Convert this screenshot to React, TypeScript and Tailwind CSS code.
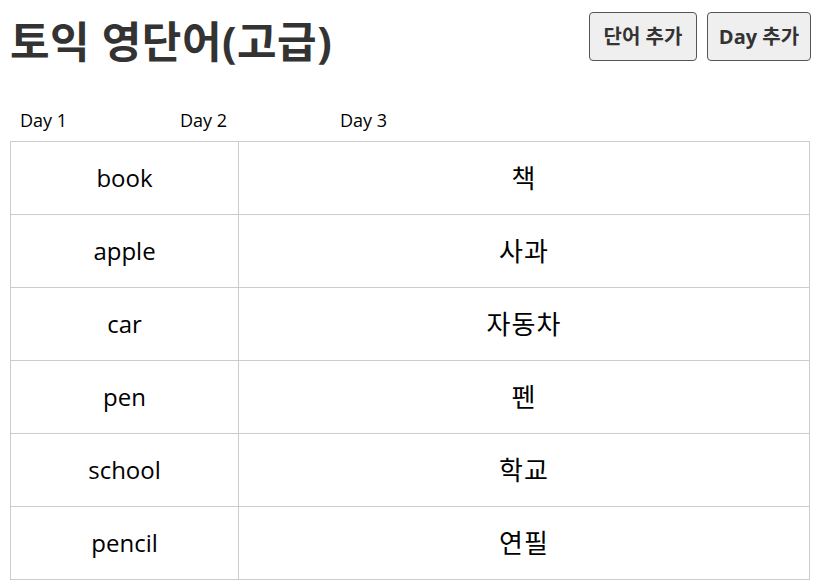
const words = [
  { eng: "book", kor: "책" },
  { eng: "apple", kor: "사과" },
  { eng: "car", kor: "자동차" },
  { eng: "pen", kor: "펜" },
  { eng: "school", kor: "학교" },
  { eng: "pencil", kor: "연필" },
];

const days = [1, 2, 3];

export default function App() {
  return (
    <div className="min-h-[587px] w-[821px] bg-white px-[10px] font-['Open_Sans','Noto_Sans_CJK_KR',sans-serif] text-black">
      <header className="flex items-start justify-between pt-[12px]">
        <h1 className="mt-[5px] text-[43px] leading-[50px] font-bold tracking-[0.5px] text-[#333]">토익 영단어(고급)</h1>
        <div className="flex gap-[10px]">
          <button
            type="button"
            className="h-[49px] w-[108px] rounded-[4px] border border-[#555] bg-[#efefef] text-[20px] font-bold text-[#333]"
          >
            단어 추가
          </button>
          <button
            type="button"
            className="h-[49px] w-[104px] rounded-[4px] border border-[#555] bg-[#efefef] text-[20px] font-bold text-[#333]"
          >
            Day 추가
          </button>
        </div>
      </header>
      <ul className="mt-[40px] flex px-[10px]">
        {days.map((d) => (
          <li key={d} className="w-[160px] text-[18px] leading-[26px]">
            Day {d}
          </li>
        ))}
      </ul>
      <table className="mt-[8px] w-[800px] border-collapse">
        <tbody>
          {words.map((w) => (
            <tr key={w.eng}>
              <td className="h-[73px] w-[228px] border border-[#ccc] text-center text-[24px]">{w.eng}</td>
              <td className="h-[73px] border border-[#ccc] text-center text-[26px] tracking-[1px]">{w.kor}</td>
            </tr>
          ))}
        </tbody>
      </table>
    </div>
  );
}
